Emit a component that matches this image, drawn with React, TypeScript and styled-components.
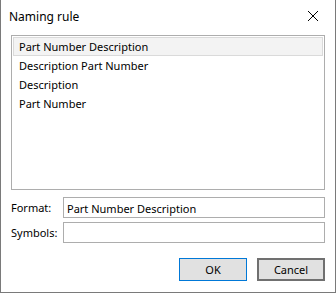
import { useState } from "react";
import styled, { createGlobalStyle } from "styled-components";

const GlobalStyle = createGlobalStyle`
  html, body {
    margin: 0;
    padding: 0;
    background: #ffffff;
  }
  * {
    box-sizing: border-box;
  }
`;

const rules = [
  "Part Number Description",
  "Description Part Number",
  "Description",
  "Part Number",
];

export default function App() {
  const [selected, setSelected] = useState(0);

  return (
    <>
      <GlobalStyle />
      <Dialog>
        <TitleBar>
          <Title>Naming rule</Title>
          <CloseButton aria-label="Close">
            <svg width="12" height="12" viewBox="0 0 12 12">
              <path d="M1 1 L11 11 M11 1 L1 11" stroke="#000" strokeWidth="1" />
            </svg>
          </CloseButton>
        </TitleBar>
        <Body>
          <ListBox>
            {rules.map((rule, i) => (
              <ListItem
                key={rule}
                $selected={i === selected}
                onClick={() => setSelected(i)}
              >
                {rule}
              </ListItem>
            ))}
          </ListBox>
          <FieldRow>
            <FieldLabel>Format:</FieldLabel>
            <TextInput defaultValue="Part Number Description" />
          </FieldRow>
          <FieldRow>
            <FieldLabel>Symbols:</FieldLabel>
            <TextInput defaultValue="" />
          </FieldRow>
          <ButtonRow>
            <DialogButton $default>OK</DialogButton>
            <DialogButton>Cancel</DialogButton>
          </ButtonRow>
        </Body>
      </Dialog>
    </>
  );
}

const Dialog = styled.div`
  width: 336px;
  height: 293px;
  background: #ffffff;
  border: 1px solid #7a7a7a;
  border-top: none;
  display: flex;
  flex-direction: column;
  font-family: "Noto Sans", "Open Sans", sans-serif;
  font-size: 11px;
  color: #000000;
`;

const TitleBar = styled.div`
  height: 31px;
  display: flex;
  align-items: center;
  justify-content: space-between;
  padding-left: 8px;
`;

const Title = styled.span`
  font-size: 12px;
  padding-top: 1px;
`;

const CloseButton = styled.button`
  width: 46px;
  height: 31px;
  border: none;
  background: transparent;
  display: flex;
  align-items: center;
  justify-content: center;
  padding: 0;
  margin-right: -1px;
`;

const Body = styled.div`
  flex: 1;
  display: flex;
  flex-direction: column;
  padding: 4px 10px 0 10px;
`;

const ListBox = styled.div`
  height: 155px;
  border: 1px solid #adadad;
  padding: 1px;
  display: flex;
  flex-direction: column;
  margin-bottom: 7px;
`;

const ListItem = styled.div<{ $selected?: boolean }>`
  height: 19px;
  line-height: 16px;
  padding: 1px 0 0 5px;
  border: 1px solid ${(p) => (p.$selected ? "#dadada" : "transparent")};
  background: ${(p) => (p.$selected ? "#f3f3f3" : "transparent")};
  white-space: nowrap;
`;

const FieldRow = styled.div`
  display: flex;
  align-items: center;
  height: 21px;
  margin-bottom: 4px;
`;

const FieldLabel = styled.span`
  width: 52px;
  flex-shrink: 0;
`;

const TextInput = styled.input`
  flex: 1;
  height: 21px;
  border: 1px solid #adadad;
  padding: 1px 3px 0 3px;
  font-family: inherit;
  font-size: 11px;
  color: #000000;
  outline: none;
`;

const ButtonRow = styled.div`
  display: flex;
  justify-content: flex-end;
  gap: 10px;
  margin-top: 11px;
`;

const DialogButton = styled.button<{ $default?: boolean }>`
  width: 68px;
  height: 23px;
  background: #e1e1e1;
  border: ${(p) => (p.$default ? "1px solid #0078d7" : "2px solid #707070")};
  font-family: inherit;
  font-size: 11px;
  color: #000000;
  padding: 0;
`;
